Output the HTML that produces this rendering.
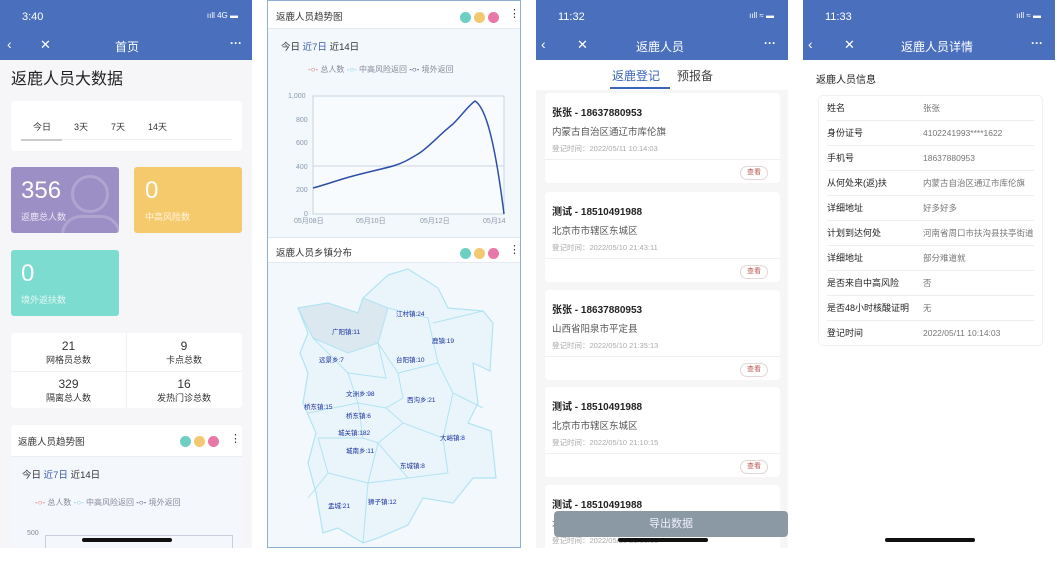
<!DOCTYPE html>
<html><head><meta charset="utf-8"><style>
*{margin:0;padding:0;box-sizing:border-box}
body{width:1057px;height:548px;background:#fff;position:relative;overflow:hidden;font-family:"Liberation Sans","Noto Sans CJK SC",sans-serif;color:#333}
.a{position:absolute}
.hdr{background:#4a6fbd;color:#fff;height:60px}
.st{font-size:11px;top:11px;left:22px}
.nav{top:38px;font-size:12px}
.card{background:#fff;border-radius:4px}
.dots span{display:inline-block;width:11px;height:11px;border-radius:50%;margin-left:3px}
.t{font-size:10px}
.row{position:absolute;left:8px;right:8px;height:25px;border-bottom:1px solid #eee;font-size:9px;line-height:25px}
.row b{font-weight:normal;color:#222;position:absolute;left:0}
.row i{font-style:normal;color:#777;position:absolute;left:96px;font-size:8.5px}
.lc{position:absolute;left:9px;width:235px;height:90px;background:#fff;border-radius:4px}
.lc .n{position:absolute;left:7px;top:11px;font-size:10px;font-weight:bold;color:#222}
.lc .ad{position:absolute;left:7px;top:31px;font-size:9.5px;color:#555}
.lc .tm{position:absolute;left:7px;top:50px;font-size:7.5px;color:#aaa}
.lc .ln{position:absolute;left:0;right:0;top:66px;border-top:1px solid #f0f0f0}
.lc .bt{position:absolute;right:12px;top:73px;width:28px;height:14px;border:1px solid #e5d5d5;border-radius:8px;font-size:7px;color:#b55;text-align:center;line-height:12px}
</style></head><body>

<!-- PANEL 1 -->
<div class="a" style="left:0;top:0;width:252px;height:548px;background:#f6f6f9;overflow:hidden">
 <div class="a hdr" style="left:0;top:0;width:252px">
  <div class="a st">3:40</div><div class="a" style="right:14px;top:11px;font-size:8px">ııll 4G ▬</div>
  <div class="a nav" style="left:7px;font-size:14px;top:36px">‹</div>
  <div class="a nav" style="left:40px;font-size:13px;top:37px">✕</div>
  <div class="a nav" style="left:115px">首页</div>
  <div class="a nav" style="right:10px;top:36px;font-weight:bold">···</div>
 </div>
 <div class="a" style="left:11px;top:65px;font-size:16px;color:#222">返鹿人员大数据</div>
 <div class="a card" style="left:11px;top:101px;width:231px;height:50px">
  <div class="a t" style="left:22px;top:19px;font-size:9px">今日</div>
  <div class="a t" style="left:63px;top:19px;font-size:9px">3天</div>
  <div class="a t" style="left:100px;top:19px;font-size:9px">7天</div>
  <div class="a t" style="left:137px;top:19px;font-size:9px">14天</div>
  <div class="a" style="left:10px;right:10px;top:38px;border-top:1px solid #eee"></div>
  <div class="a" style="left:10px;width:41px;top:38px;border-top:2px solid #ccc"></div>
 </div>
 <div class="a" style="left:11px;top:167px;width:108px;height:66px;background:#9b8fc6;border-radius:3px;color:#fff;overflow:hidden">
  <div class="a" style="left:60px;top:8px;width:38px;height:38px;border:3px solid rgba(255,255,255,.2);border-radius:50%"></div>
  <div class="a" style="left:50px;top:48px;width:60px;height:40px;border:3px solid rgba(255,255,255,.2);border-radius:20px 20px 0 0"></div>
  <div class="a" style="left:10px;top:10px;font-size:24px">356</div>
  <div class="a" style="left:10px;top:43px;font-size:9px;opacity:.8">返鹿总人数</div>
 </div>
 <div class="a" style="left:134px;top:167px;width:108px;height:66px;background:#f5ca6d;border-radius:3px;color:#fff">
  <div class="a" style="left:11px;top:10px;font-size:24px">0</div>
  <div class="a" style="left:11px;top:43px;font-size:9px;opacity:.8">中高风险数</div>
 </div>
 <div class="a" style="left:11px;top:250px;width:108px;height:66px;background:#7ddcd0;border-radius:3px;color:#fff">
  <div class="a" style="left:10px;top:10px;font-size:24px">0</div>
  <div class="a" style="left:10px;top:43px;font-size:9px;opacity:.8">境外返扶数</div>
 </div>
 <div class="a card" style="left:11px;top:333px;width:231px;height:75px;font-size:9px;text-align:center">
  <div class="a" style="left:0;width:115px;top:6px;font-size:12px">21</div>
  <div class="a" style="left:0;width:115px;top:20px">网格员总数</div>
  <div class="a" style="left:115px;width:116px;top:6px;font-size:12px">9</div>
  <div class="a" style="left:115px;width:116px;top:20px">卡点总数</div>
  <div class="a" style="left:0;width:115px;top:44px;font-size:12px">329</div>
  <div class="a" style="left:0;width:115px;top:58px">隔离总人数</div>
  <div class="a" style="left:115px;width:116px;top:44px;font-size:12px">16</div>
  <div class="a" style="left:115px;width:116px;top:58px">发热门诊总数</div>
  <div class="a" style="left:115px;top:0;height:75px;border-left:1px solid #f0f0f0"></div>
  <div class="a" style="left:0;right:0;top:38px;border-top:1px solid #f0f0f0"></div>
 </div>
 <div class="a card" style="left:11px;top:425px;width:231px;height:123px;background:#f4f8fc;overflow:hidden">
  <div class="a" style="left:0;top:0;width:231px;height:32px;background:#fff;border-bottom:1px solid #eaeef2"></div>
  <div class="a" style="left:7px;top:9px;font-size:9.5px">返鹿人员趋势图</div>
  <div class="a dots" style="left:166px;top:9px"><span style="background:#6ccfc2"></span><span style="background:#f2c870"></span><span style="background:#e878a8"></span></div>
  <div class="a" style="left:219px;top:7px;font-size:11px">⋮</div>
  <div class="a" style="left:11px;top:42px;font-size:9.5px">今日 <span style="color:#3a5cab">近7日</span> 近14日</div>
  <div class="a" style="left:24px;top:72px;font-size:8px;color:#889"><span style="color:#d66">-○-</span> 总人数 <span style="color:#7cd">-○-</span> 中高风险返回 <span style="color:#336">-○-</span> 境外返回</div>
  <div class="a" style="left:16px;top:105px;font-size:7px;color:#889">500</div>
  <div class="a" style="left:34px;top:110px;width:188px;height:20px;border:1px solid #ccd"></div>
 </div>
 <div class="a" style="left:82px;top:538px;width:90px;height:4px;background:#111;border-radius:2px"></div>
</div>

<!-- PANEL 2 -->
<div class="a" style="left:267px;top:0;width:254px;height:548px;border:1px solid #8eaed2;background:#f3f8fc">
 <div class="a" style="left:0;top:0;width:252px;height:28px;background:#fff;border-bottom:1px solid #e4eaf0"></div>
 <div class="a" style="left:8px;top:8px;font-size:9.5px">返鹿人员趋势图</div>
 <div class="a dots" style="left:189px;top:9px"><span style="background:#6ccfc2"></span><span style="background:#f2c870"></span><span style="background:#e878a8"></span></div>
 <div class="a" style="left:241px;top:6px;font-size:11px">⋮</div>
 <div class="a" style="left:13px;top:38px;font-size:9.5px">今日 <span style="color:#3a5cab">近7日</span> 近14日</div>
 <div class="a" style="left:40px;top:63px;font-size:8px;color:#889"><span style="color:#d66">-○-</span> 总人数 <span style="color:#7cd">-○-</span> 中高风险返回 <span style="color:#336">-○-</span> 境外返回</div>
 <svg class="a" style="left:0;top:85px" width="252" height="140">
  <g font-size="7" fill="#8899aa" font-family="Liberation Sans">
   <text x="20" y="12">1,000</text><text x="28" y="36">800</text><text x="28" y="59">600</text><text x="28" y="83">400</text><text x="28" y="106">200</text><text x="36" y="130">0</text>
   <text x="26" y="137">05月08日</text><text x="88" y="137">05月10日</text><text x="152" y="137">05月12日</text><text x="215" y="137">05月14</text>
  </g>
  <rect x="45" y="10" width="191" height="118" fill="#f7fbfe" stroke="#c8d4e0"/>
  <line x1="45" y1="80" x2="236" y2="80" stroke="#ccd6e0"/>
  <path d="M45 102 C60 98 70 94 85 90 C100 86 110 84 125 80 C135 77 140 74 150 68 C160 62 170 50 185 38 C195 28 200 20 207 15 C215 20 225 40 236 128" fill="none" stroke="#2e4fa8" stroke-width="1.5"/>
 </svg>
 <div class="a" style="left:0;top:236px;width:252px;height:26px;background:#fff;border-top:1px solid #dfe6ee;border-bottom:1px solid #e4eaf0"></div>
 <div class="a" style="left:8px;top:244px;font-size:9.5px">返鹿人员乡镇分布</div>
 <div class="a dots" style="left:189px;top:245px"><span style="background:#6ccfc2"></span><span style="background:#f2c870"></span><span style="background:#e878a8"></span></div>
 <div class="a" style="left:241px;top:242px;font-size:11px">⋮</div>
 <svg class="a" style="left:0;top:262px" width="252" height="284">
  <path d="M120 12 L140 6 L170 25 L180 45 L215 48 L225 60 L222 108 L205 100 L210 140 L200 160 L223 168 L228 215 L205 215 L185 240 L155 235 L140 262 L110 275 L95 280 L70 265 L55 270 L48 230 L40 200 L48 170 L35 140 L40 110 L32 90 L40 70 L30 45 L60 40 L90 50 L95 35 Z" fill="#e9f5fb" stroke="#b2e3f2" stroke-width="1.2"/>
  <path d="M30 45 L60 40 L90 50 L95 35 L120 45 L110 80 L80 90 L45 75 Z" fill="#dbe8f0" stroke="#b2e3f2"/>
  <path d="M120 45 L160 55 L170 100 L130 110 L110 80 M165 60 L215 48 M110 80 L118 115 L80 110 L45 75 M130 110 L135 135 L118 145 L90 140 L80 110 M170 100 L185 130 L175 175 L135 160 L118 145 M40 150 L90 140 L95 175 L50 175 M95 175 L110 180 L135 160 M185 130 L215 145 M175 175 L180 210 L140 215 L110 180 M50 175 L60 210 L100 220 L110 180 M60 210 L40 235 M100 220 L140 215 M100 220 L95 280" fill="none" stroke="#b2e3f2" stroke-width="1"/>
  <g font-size="6.5" fill="#1a2fa0" font-family="Liberation Sans,Noto Sans CJK SC">
   <text x="128" y="53">江村镇:24</text><text x="64" y="71">广阳镇:11</text><text x="164" y="80">鹿镇:19</text>
   <text x="51" y="99">远景乡:7</text><text x="128" y="99">台阳镇:10</text><text x="78" y="133">文洲乡:98</text>
   <text x="139" y="139">西沟乡:21</text><text x="36" y="146">桥东镇:15</text><text x="78" y="155">桥东镇:6</text>
   <text x="70" y="172">城关镇:182</text><text x="172" y="177">大峪镇:8</text><text x="78" y="190">城南乡:11</text>
   <text x="132" y="205">东城镇:8</text><text x="60" y="245">盂城:21</text><text x="100" y="241">狮子镇:12</text>
  </g>
 </svg>
</div>

<!-- PANEL 3 -->
<div class="a" style="left:536px;top:0;width:252px;height:548px;background:#f6f6f6">
 <div class="a hdr" style="left:0;top:0;width:252px">
  <div class="a st">11:32</div><div class="a" style="right:14px;top:11px;font-size:8px">ııll ≈ ▬</div>
  <div class="a nav" style="left:5px;font-size:14px;top:36px">‹</div>
  <div class="a nav" style="left:41px;font-size:13px;top:37px">✕</div>
  <div class="a nav" style="left:100px">返鹿人员</div>
  <div class="a nav" style="right:12px;top:36px;font-weight:bold">···</div>
 </div>
 <div class="a" style="left:0;top:60px;width:252px;height:30px;background:#fff"></div>
 <div class="a" style="left:76px;top:67px;font-size:12px;color:#3a64b8">返鹿登记</div>
 <div class="a" style="left:141px;top:67px;font-size:12px;color:#444">预报备</div>
 <div class="a" style="left:74px;top:87px;width:60px;height:2px;background:#3a64b8"></div>
 <div class="lc" style="top:93px"><div class="n">张张 - 18637880953</div><div class="ad">内蒙古自治区通辽市库伦旗</div><div class="tm">登记时间：2022/05/11 10:14:03</div><div class="ln"></div><div class="bt">查看</div></div>
 <div class="lc" style="top:192px"><div class="n">测试 - 18510491988</div><div class="ad">北京市市辖区东城区</div><div class="tm">登记时间：2022/05/10 21:43:11</div><div class="ln"></div><div class="bt">查看</div></div>
 <div class="lc" style="top:290px"><div class="n">张张 - 18637880953</div><div class="ad">山西省阳泉市平定县</div><div class="tm">登记时间：2022/05/10 21:35:13</div><div class="ln"></div><div class="bt">查看</div></div>
 <div class="lc" style="top:387px"><div class="n">测试 - 18510491988</div><div class="ad">北京市市辖区东城区</div><div class="tm">登记时间：2022/05/10 21:10:15</div><div class="ln"></div><div class="bt">查看</div></div>
 <div class="lc" style="top:485px"><div class="n">测试 - 18510491988</div><div class="ad">北京市市辖区东城区</div><div class="tm">登记时间：2022/05/10 21:00:00</div></div>
 <div class="a" style="left:18px;top:511px;width:234px;height:26px;background:#8a99a4;border-radius:4px;color:#eef;font-size:11px;text-align:center;line-height:26px">导出数据</div>
 <div class="a" style="left:82px;top:538px;width:90px;height:4px;background:#111;border-radius:2px"></div>
</div>

<!-- PANEL 4 -->
<div class="a" style="left:803px;top:0;width:252px;height:548px;background:#fff">
 <div class="a hdr" style="left:0;top:0;width:252px">
  <div class="a st">11:33</div><div class="a" style="right:14px;top:11px;font-size:8px">ııll ≈ ▬</div>
  <div class="a nav" style="left:5px;font-size:14px;top:36px">‹</div>
  <div class="a nav" style="left:41px;font-size:13px;top:37px">✕</div>
  <div class="a nav" style="left:98px">返鹿人员详情</div>
  <div class="a nav" style="right:12px;top:36px;font-weight:bold">···</div>
 </div>
 <div class="a" style="left:13px;top:71px;font-size:10px;color:#222">返鹿人员信息</div>
 <div class="a" style="left:15px;top:95px;width:225px;height:251px;border:1px solid #f0f0f0;border-radius:5px">
  <div class="row" style="top:0"><b>姓名</b><i>张张</i></div>
  <div class="row" style="top:25px"><b>身份证号</b><i>4102241993****1622</i></div>
  <div class="row" style="top:50px"><b>手机号</b><i>18637880953</i></div>
  <div class="row" style="top:75px"><b>从何处来(返)扶</b><i>内蒙古自治区通辽市库伦旗</i></div>
  <div class="row" style="top:100px"><b>详细地址</b><i>好多好多</i></div>
  <div class="row" style="top:125px"><b>计划到达何处</b><i>河南省周口市扶沟县扶亭街道</i></div>
  <div class="row" style="top:150px"><b>详细地址</b><i>部分难道就</i></div>
  <div class="row" style="top:175px"><b>是否来自中高风险</b><i>否</i></div>
  <div class="row" style="top:200px"><b>是否48小时核酸证明</b><i>无</i></div>
  <div class="row" style="top:225px;border:none"><b>登记时间</b><i>2022/05/11 10:14:03</i></div>
 </div>
 <div class="a" style="left:82px;top:538px;width:90px;height:4px;background:#111;border-radius:2px"></div>
</div>
</body></html>
